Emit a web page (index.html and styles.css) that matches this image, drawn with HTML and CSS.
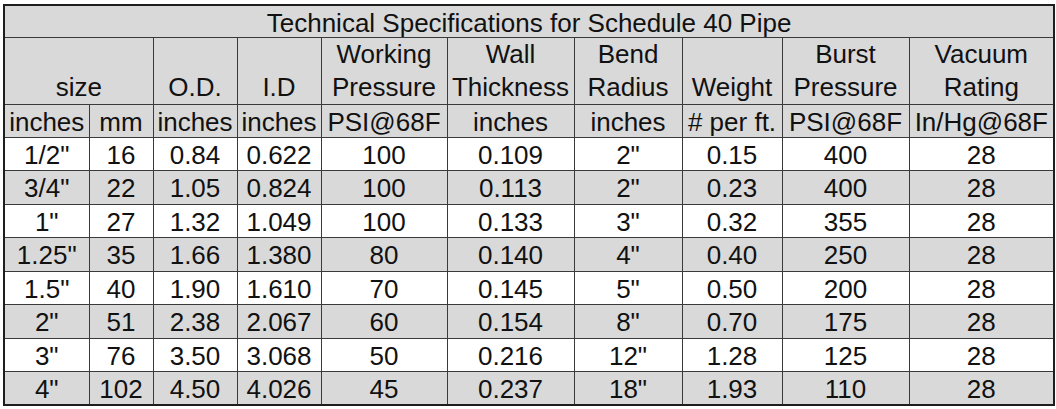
FILE: index.html
```html
<!DOCTYPE html>
<html>
<head>
<meta charset="utf-8">
<title>Technical Specifications for Schedule 40 Pipe</title>
<link rel="stylesheet" href="styles.css">
</head>
<body>
<table class="spec">
  <colgroup>
    <col class="c1"><col class="c2"><col class="c3"><col class="c4"><col class="c5">
    <col class="c6"><col class="c7"><col class="c8"><col class="c9"><col class="c10">
  </colgroup>
  <tr class="title"><td colspan="10">Technical Specifications for Schedule 40 Pipe</td></tr>
  <tr class="head">
    <td colspan="2">size</td>
    <td>O.D.</td>
    <td>I.D</td>
    <td>Working<br>Pressure</td>
    <td>Wall<br>Thickness</td>
    <td>Bend<br>Radius</td>
    <td>Weight</td>
    <td>Burst<br>Pressure</td>
    <td>Vacuum<br>Rating</td>
  </tr>
  <tr class="units">
    <td>inches</td><td>mm</td><td>inches</td><td>inches</td><td>PSI@68F</td>
    <td>inches</td><td>inches</td><td># per ft.</td><td>PSI@68F</td><td>In/Hg@68F</td>
  </tr>
  <tr class="row odd"><td>1/2"</td><td>16</td><td>0.84</td><td>0.622</td><td>100</td><td>0.109</td><td>2"</td><td>0.15</td><td>400</td><td>28</td></tr>
  <tr class="row even tall"><td>3/4"</td><td>22</td><td>1.05</td><td>0.824</td><td>100</td><td>0.113</td><td>2"</td><td>0.23</td><td>400</td><td>28</td></tr>
  <tr class="row odd"><td>1"</td><td>27</td><td>1.32</td><td>1.049</td><td>100</td><td>0.133</td><td>3"</td><td>0.32</td><td>355</td><td>28</td></tr>
  <tr class="row even tall"><td>1.25"</td><td>35</td><td>1.66</td><td>1.380</td><td>80</td><td>0.140</td><td>4"</td><td>0.40</td><td>250</td><td>28</td></tr>
  <tr class="row odd"><td>1.5"</td><td>40</td><td>1.90</td><td>1.610</td><td>70</td><td>0.145</td><td>5"</td><td>0.50</td><td>200</td><td>28</td></tr>
  <tr class="row even tall"><td>2"</td><td>51</td><td>2.38</td><td>2.067</td><td>60</td><td>0.154</td><td>8"</td><td>0.70</td><td>175</td><td>28</td></tr>
  <tr class="row odd"><td>3"</td><td>76</td><td>3.50</td><td>3.068</td><td>50</td><td>0.216</td><td>12"</td><td>1.28</td><td>125</td><td>28</td></tr>
  <tr class="row even"><td>4"</td><td>102</td><td>4.50</td><td>4.026</td><td>45</td><td>0.237</td><td>18"</td><td>1.93</td><td>110</td><td>28</td></tr>
</table>
</body>
</html>
```
FILE: styles.css
```css
html, body {
  margin: 0;
  padding: 0;
  background: #ffffff;
}

body {
  padding: 4px 0 0 3px;
}

.spec {
  border-collapse: collapse;
  table-layout: fixed;
  width: 1050px;
  font-family: "Liberation Sans", Arial, sans-serif;
  font-size: 26px;
  color: #111111;
  border: 2px solid #1e1e1e;
}

.c1 { width: 85px; }
.c2 { width: 64px; }
.c3 { width: 84px; }
.c4 { width: 84px; }
.c5 { width: 126px; }
.c6 { width: 127px; }
.c7 { width: 108px; }
.c8 { width: 100px; }
.c9 { width: 127px; }
.c10 { width: 145px; }

.spec td {
  border: 1px solid #3a3a3a;
  text-align: center;
  vertical-align: top;
  padding: 3px 0 0 0;
  line-height: 29px;
  white-space: nowrap;
  overflow: hidden;
}

.title td {
  background: #d9d9d9;
  height: 28px;
  line-height: 28px;
}

.head td {
  background: #d9d9d9;
  height: 66px;
  padding: 0;
  line-height: 33px;
  vertical-align: bottom;
}

.units td {
  background: #d9d9d9;
  height: 29px;
}

.row td {
  height: 29px;
}

.row.tall td {
  height: 30px;
}

.row.odd td {
  background: #ffffff;
}

.row.even td {
  background: #d9d9d9;
}
```
